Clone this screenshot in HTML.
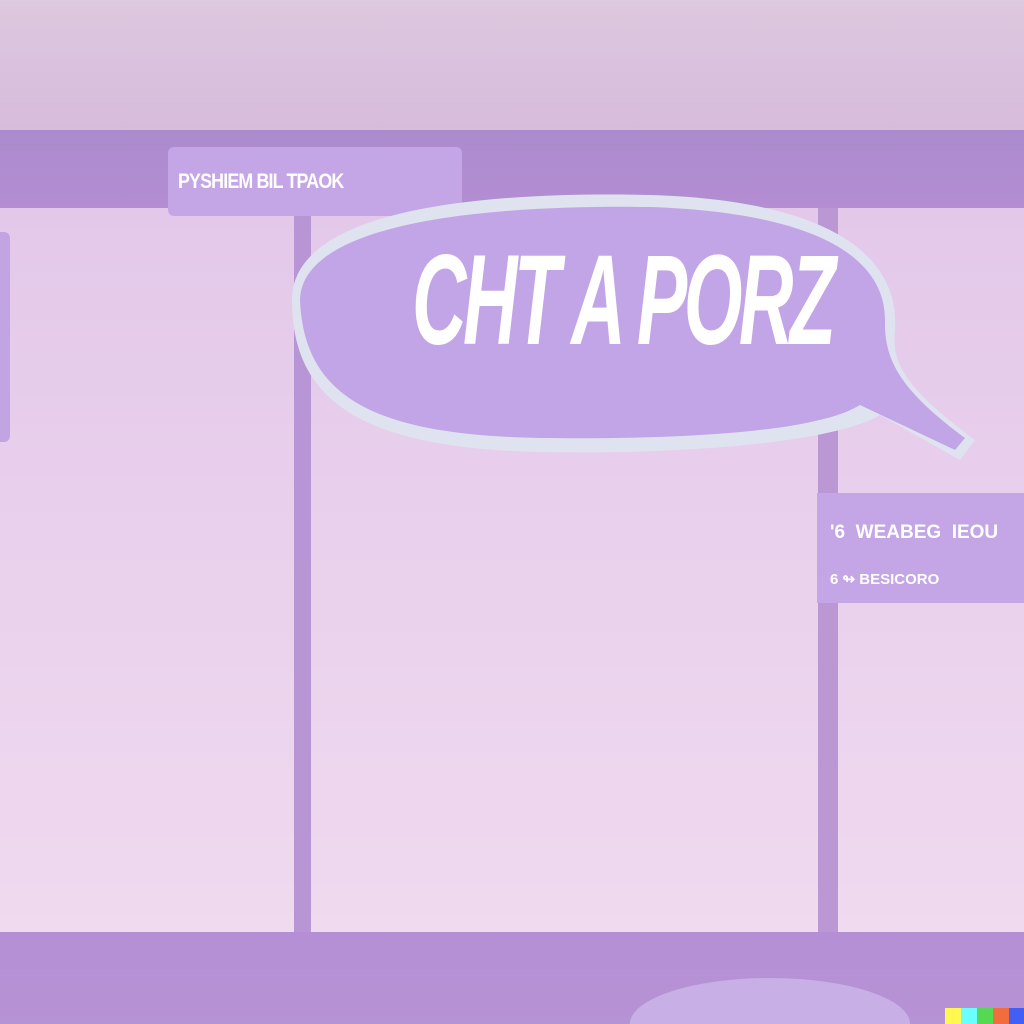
<!DOCTYPE html>
<html><head><meta charset="utf-8"><style>
html,body{margin:0;padding:0;width:1024px;height:1024px;overflow:hidden}
body{position:relative;font-family:"Liberation Sans",sans-serif;background:linear-gradient(#e0c3e8,#f1dcf0)}
div{position:absolute}
</style></head><body>
<div style="left:0;top:0;width:1024px;height:132px;background:linear-gradient(#dcc8df,#d7bcdc)"></div>
<div style="left:0;top:130px;width:1024px;height:78px;background:linear-gradient(#ab8bcd,#b48dd3)"></div>
<div style="left:294px;top:208px;width:17px;height:730px;background:#b895d4"></div>
<div style="left:818px;top:208px;width:20px;height:730px;background:#bb98d4"></div>
<div style="left:0;top:232px;width:10px;height:210px;background:#c2a4e2;border-radius:0 6px 6px 0"></div>
<div style="left:168px;top:147px;width:294px;height:69px;background:#c4a6e6;border-radius:6px"></div>
<div style="left:178px;top:170px;color:#fff;font-size:21px;font-weight:bold;letter-spacing:-1px;transform:scaleX(.85);transform-origin:left">PYSHIEM BIL TPAOK</div>
<svg style="position:absolute;left:0;top:0" width="1024" height="1024">
<path d="M292 300 C292 200 520 192 650 195 C820 200 900 250 895 330 C892 360 900 385 975 440 L960 460 L880 415 C840 440 700 455 540 452 C360 448 292 400 292 300 Z" fill="#dfe3ef"/>
<path d="M300 300 C302 215 520 205 650 207 C800 212 885 250 885 320 C884 360 900 390 965 438 L955 450 L860 405 C820 430 700 440 540 438 C370 435 304 395 300 300 Z" fill="#c2a5e6"/>
</svg>
<div style="left:412px;top:236px;color:#fff;font-size:128px;font-weight:bold;font-style:italic;letter-spacing:-6px;transform:scaleX(.59);transform-origin:left;line-height:130px;white-space:nowrap">CHT A PORZ</div>
<div style="left:817px;top:493px;width:210px;height:110px;background:#c4a6e6"></div>
<div style="left:830px;top:510px;color:#fff;font-size:19px;font-weight:bold;line-height:46px;white-space:pre">'6  WEABEG  IEOU
<span style="font-size:15px">6 ↬ BESICORO</span></div>
<div style="left:0;top:932px;width:1024px;height:92px;background:linear-gradient(#b58fd5,#b693d5)"></div>
<div style="left:630px;top:978px;width:280px;height:46px;background:#c8b0e6;border-radius:140px 140px 0 0/46px 46px 0 0"></div>
<div style="left:945px;top:1008px;width:16px;height:16px;background:#fef851"></div>
<div style="left:961px;top:1008px;width:16px;height:16px;background:#6afefe"></div>
<div style="left:977px;top:1008px;width:16px;height:16px;background:#55d952"></div>
<div style="left:993px;top:1008px;width:16px;height:16px;background:#f26d3e"></div>
<div style="left:1009px;top:1008px;width:15px;height:16px;background:#3f5ff6"></div>
</body></html>
